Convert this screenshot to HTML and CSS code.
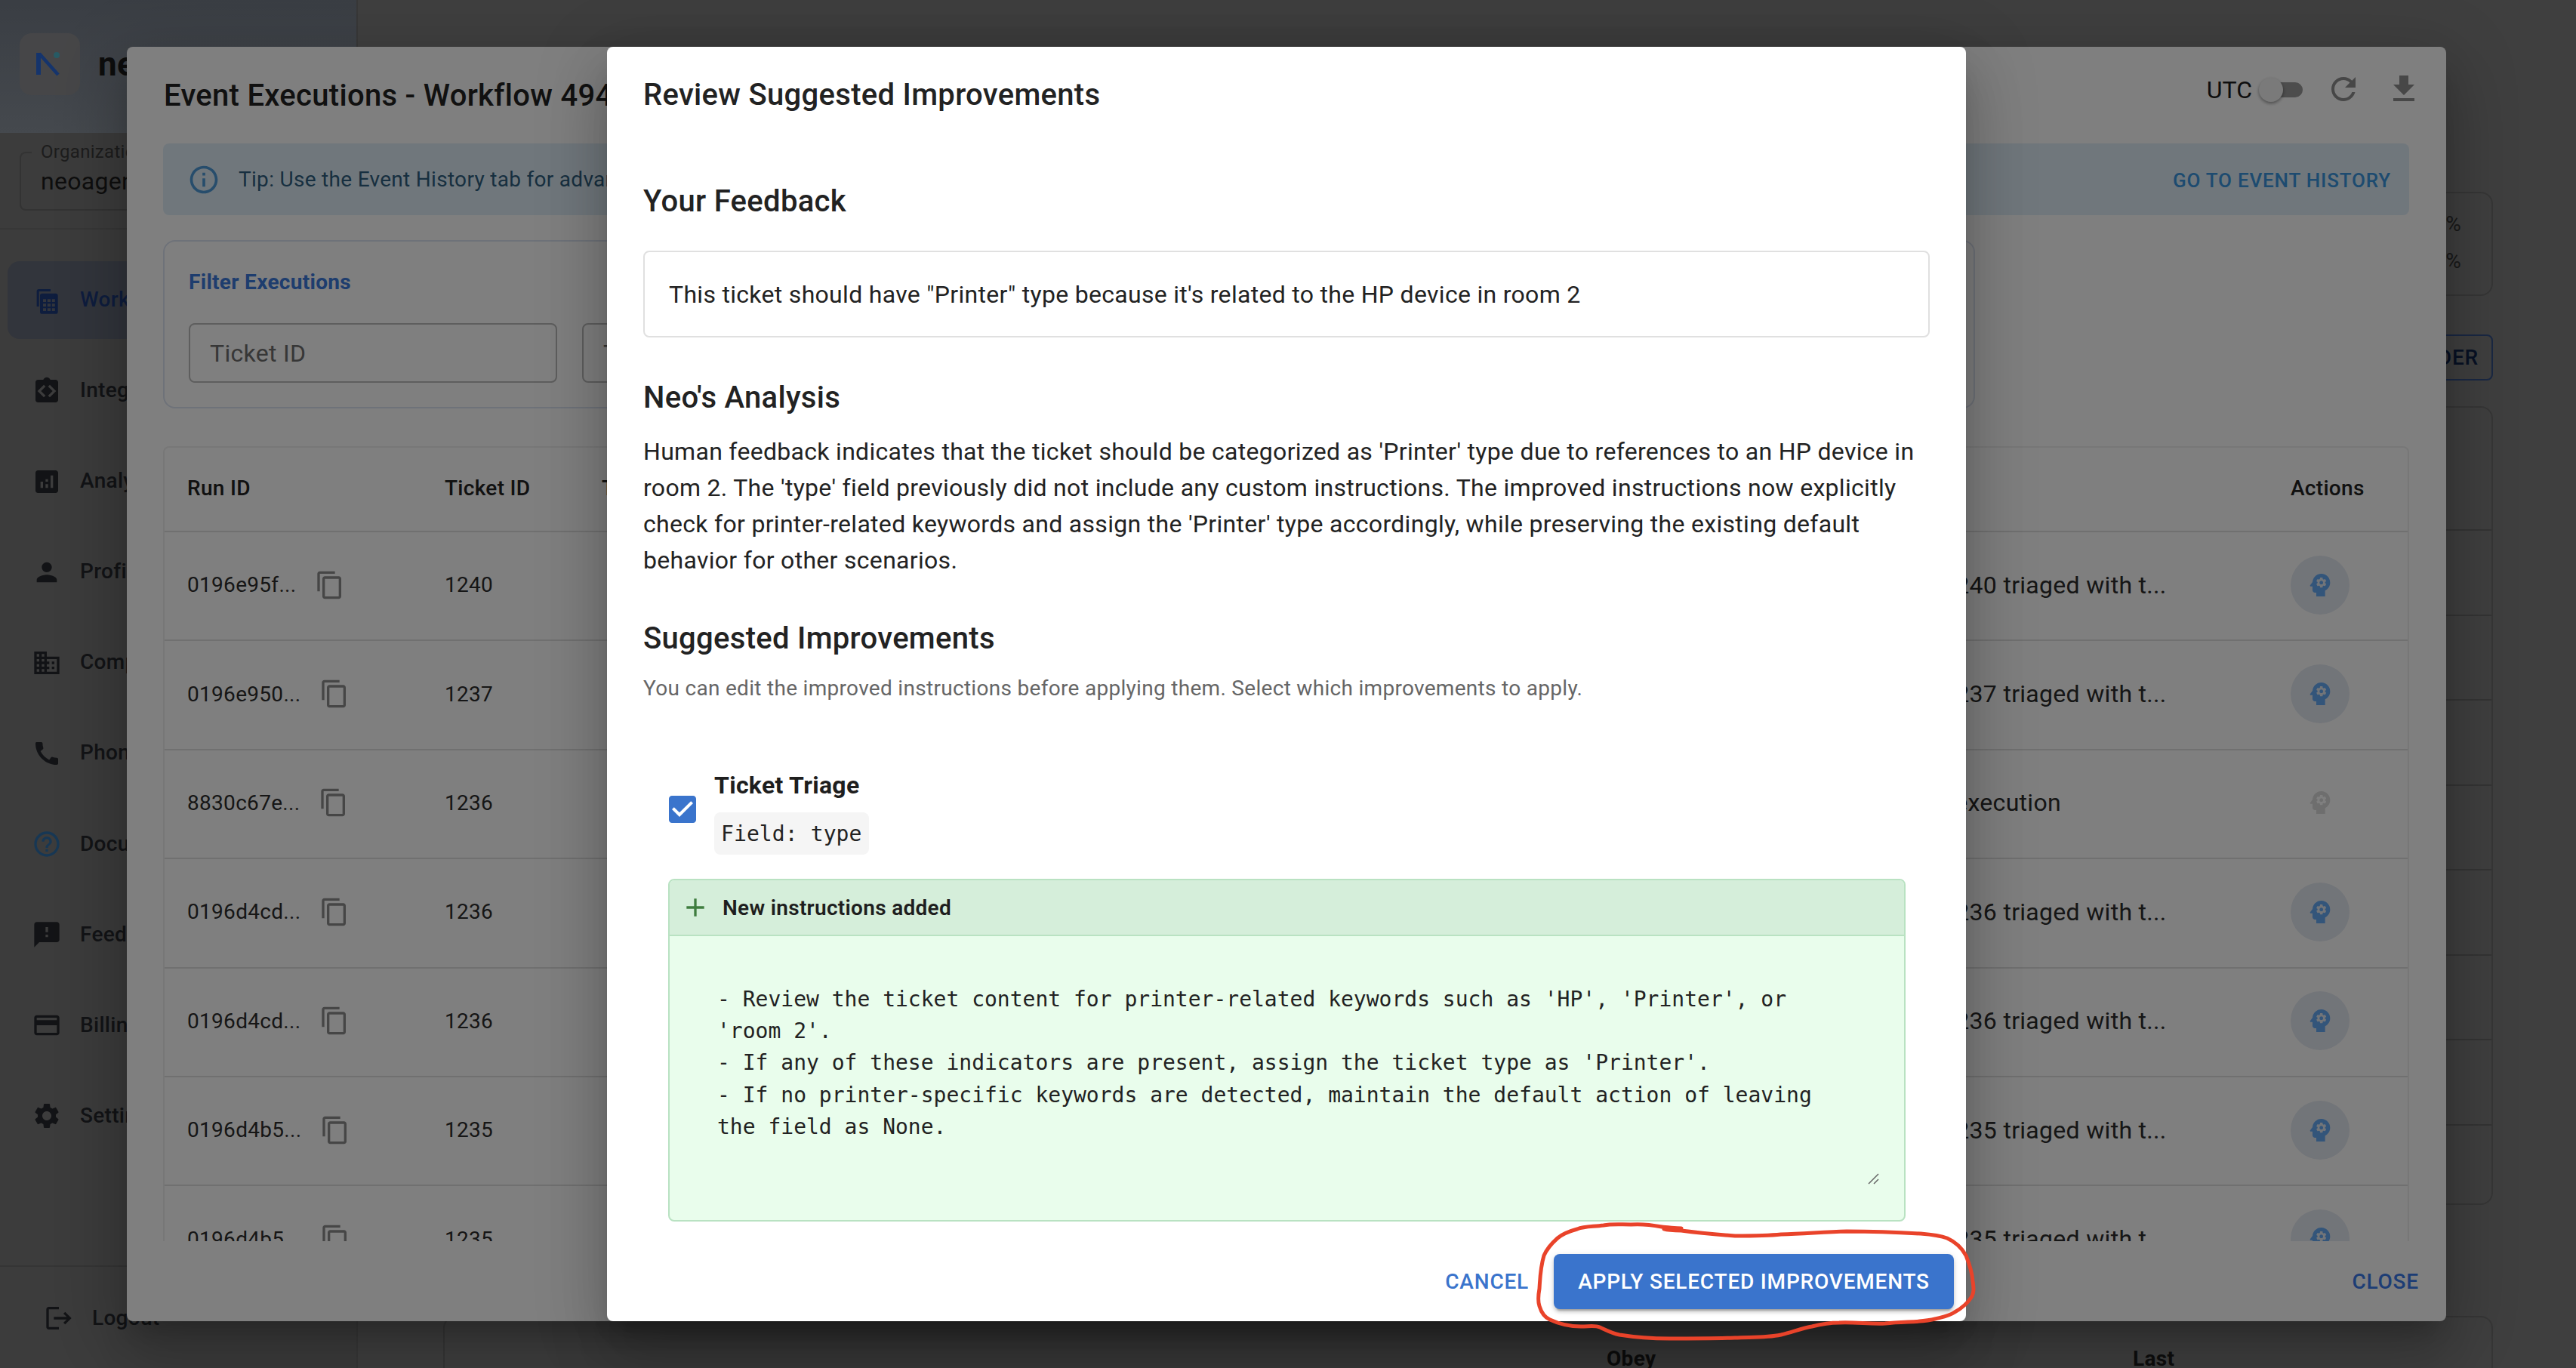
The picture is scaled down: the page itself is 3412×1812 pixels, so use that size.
FILE: index.html
```html
<!DOCTYPE html>
<html lang="en">
<head>
<meta charset="utf-8">
<title>Review Suggested Improvements</title>
<link rel="stylesheet" href="styles.css">
</head>
<body>
<svg class="defs" width="0" height="0" aria-hidden="true">
  <symbol id="i-copy" viewBox="0 0 24 24"><path d="M16 1H4c-1.1 0-2 .9-2 2v14h2V3h12V1zm3 4H8c-1.1 0-2 .9-2 2v14c0 1.1.9 2 2 2h11c1.1 0 2-.9 2-2V7c0-1.1-.9-2-2-2zm0 16H8V7h11v14z"/></symbol>
  <symbol id="i-head" viewBox="0 0 24 24"><path d="M13 8.57c-.79 0-1.43.64-1.43 1.43s.64 1.43 1.43 1.43 1.43-.64 1.43-1.43-.64-1.43-1.43-1.43z"/><path d="M13 3C9.25 3 6.2 5.94 6.02 9.64L4.1 12.2c-.25.33-.01.8.4.8H6v3c0 1.1.9 2 2 2h1v3h7v-4.68c2.36-1.12 4-3.53 4-6.32 0-3.87-3.13-7-7-7zm3 7c0 .13-.01.26-.02.39l.83.66c.08.06.1.16.05.25l-.8 1.39c-.05.09-.16.12-.24.09l-.99-.4c-.21.16-.43.29-.67.39L14 13.83c-.01.1-.1.17-.2.17h-1.6c-.1 0-.18-.07-.2-.17l-.15-1.06c-.25-.1-.47-.23-.68-.39l-.99.4c-.09.03-.2 0-.25-.09l-.8-1.39c-.05-.08-.03-.19.05-.25l.84-.66c-.01-.13-.02-.26-.02-.39s.02-.27.04-.39l-.85-.66c-.08-.06-.1-.16-.05-.26l.8-1.38c.05-.09.15-.12.24-.09l1 .4c.2-.15.43-.29.67-.39L12 6.17c.02-.1.1-.17.2-.17h1.6c.1 0 .18.07.2.17l.15 1.06c.24.1.46.23.67.39l1-.4c.09-.03.2 0 .24.09l.8 1.38c.05.09.03.2-.05.26l-.85.66c.03.12.04.25.04.39z"/></symbol>
</svg>

<div class="app">
  <aside class="sidebar">
    <div class="brand">
      <div class="logo">
        <svg viewBox="0 0 80 82" width="80" height="82"><path class="logo-n" d="M25 55V26"/><path class="logo-d" d="M26 27L51 55"/><circle class="logo-dot" cx="49" cy="29" r="4"/></svg>
      </div>
      <span class="brand-name">neoagent</span>
    </div>
    <div class="org">
      <div class="org-field">
        <span class="org-label">Organization</span>
        <span class="org-value">neoagent</span>
      </div>
    </div>
    <nav class="nav">
      <a class="nav-item active">
        <svg class="nav-icon" viewBox="0 0 24 24"><path d="M4 4.5C4 3.7 4.7 3 5.5 3H15v1.8H5.8v12H4z"/><path fill-rule="evenodd" d="M8.2 6.5h11c.9 0 1.6.7 1.6 1.6v13c0 .9-.7 1.6-1.6 1.6h-11c-.9 0-1.6-.7-1.6-1.6v-13c0-.9.7-1.6 1.6-1.6zM9 11v2.2h2.4V11zm3.5 0v2.2H15V11zm3.6 0v2.2h2.4V11zM9 14.6v2.2h2.4v-2.2zm3.5 0v2.2H15v-2.2zm3.6 0v2.2h2.4v-2.2zM9 18.2v2.2h2.4v-2.2zm3.5 0v2.2H15v-2.2zm3.6 0v2.2h2.4v-2.2z"/></svg>
        <span>Workflows</span>
      </a>
      <a class="nav-item">
        <svg class="nav-icon" viewBox="0 0 24 24"><path fill-rule="evenodd" d="M19 3h-4.2C14.4 1.8 13.3 1 12 1s-2.4.8-2.8 2H5c-1.1 0-2 .9-2 2v14c0 1.1.9 2 2 2h14c1.100 0 2-.9 2-2V5c0-1.100-.9-2-2-2zM11 15.600 9.600 17l-5-5 5-5L11 8.400 7.400 12zm3.400 1.400L13 15.600l3.600-3.600L13 8.400 14.400 7l5 5z"/></svg>
        <span>Integrations</span>
      </a>
      <a class="nav-item">
        <svg class="nav-icon" viewBox="0 0 24 24"><path d="M19 3H5c-1.100 0-2 .9-2 2v14c0 1.100.9 2 2 2h14c1.100 0 2-.9 2-2V5c0-1.100-.9-2-2-2zM9 17H7v-5h2v5zm4 0h-2v-3h2v3zm0-5h-2v-2h2v2zm4 5h-2V7h2v10z"/></svg>
        <span>Analytics</span>
      </a>
      <a class="nav-item">
        <svg class="nav-icon" viewBox="0 0 24 24"><path d="M12 12c2.210 0 4-1.790 4-4s-1.790-4-4-4-4 1.790-4 4 1.790 4 4 4zm0 2c-2.670 0-8 1.340-8 4v2h16v-2c0-2.660-5.330-4-8-4z"/></svg>
        <span>Profile</span>
      </a>
      <a class="nav-item">
        <svg class="nav-icon" viewBox="0 0 24 24"><path d="M12 7V3H2v18h20V7H12zM6 19H4v-2h2v2zm0-4H4v-2h2v2zm0-4H4V9h2v2zm0-4H4V5h2v2zm4 12H8v-2h2v2zm0-4H8v-2h2v2zm0-4H8V9h2v2zm0-4H8V5h2v2zm10 12h-8v-2h2v-2h-2v-2h2v-2h-2V9h8v10zm-2-8h-2v2h2v-2zm0 4h-2v2h2v-2z"/></svg>
        <span>Company</span>
      </a>
      <a class="nav-item">
        <svg class="nav-icon" viewBox="0 0 24 24"><path d="M20.010 15.380c-1.230 0-2.420-.2-3.530-.56-.35-.12-.74-.03-1.010.24l-1.570 1.970c-2.830-1.350-5.480-3.900-6.890-6.830l1.950-1.660c.27-.28.35-.67.24-1.020-.37-1.110-.56-2.300-.56-3.530 0-.54-.45-.99-.99-.99H4.190C3.650 3 3 3.240 3 3.990 3 13.280 10.730 21 20.010 21c.71 0 .99-.63.99-1.180v-3.450c0-.54-.45-.99-.99-.99z"/></svg>
        <span>Phone</span>
      </a>
      <a class="nav-item">
        <svg class="nav-icon help" viewBox="0 0 24 24"><path d="M11 18h2v-2h-2v2zm1-16C6.480 2 2 6.480 2 12s4.480 10 10 10 10-4.480 10-10S17.520 2 12 2zm0 18c-4.410 0-8-3.590-8-8s3.590-8 8-8 8 3.590 8 8-3.590 8-8 8zm0-14c-2.210 0-4 1.790-4 4h2c0-1.100.9-2 2-2s2 .9 2 2c0 2-3 1.750-3 5h2c0-2.250 3-2.500 3-5 0-2.210-1.790-4-4-4z"/></svg>
        <span>Documentation</span>
      </a>
      <a class="nav-item">
        <svg class="nav-icon" viewBox="0 0 24 24"><path d="M20 2H4c-1.100 0-1.990.9-1.990 2L2 22l4-4h14c1.100 0 2-.9 2-2V4c0-1.100-.9-2-2-2zm-7 12h-2v-2h2v2zm0-4h-2V6h2v4z"/></svg>
        <span>Feedback</span>
      </a>
      <a class="nav-item">
        <svg class="nav-icon" viewBox="0 0 24 24"><path d="M20 4H4c-1.110 0-1.990.89-1.990 2L2 18c0 1.110.89 2 2 2h16c1.110 0 2-.89 2-2V6c0-1.110-.89-2-2-2zm0 14H4v-6h16v6zm0-10H4V6h16v2z"/></svg>
        <span>Billing</span>
      </a>
      <a class="nav-item">
        <svg class="nav-icon" viewBox="0 0 24 24"><path d="M19.140 12.940c.04-.3.06-.61.06-.94 0-.32-.02-.64-.07-.94l2.030-1.580c.18-.14.23-.41.12-.61l-1.920-3.320c-.12-.22-.37-.29-.59-.22l-2.390.96c-.5-.38-1.030-.7-1.620-.94l-.36-2.540c-.04-.24-.24-.41-.48-.41h-3.840c-.24 0-.43.17-.47.41l-.36 2.540c-.59.24-1.130.57-1.620.94l-2.390-.96c-.22-.08-.47 0-.59.22L2.740 8.870c-.12.21-.08.47.12.61l2.030 1.580c-.05.3-.09.63-.09.94s.02.64.07.94l-2.030 1.580c-.18.14-.23.41-.12.61l1.920 3.320c.12.22.37.29.59.22l2.390-.96c.5.38 1.030.7 1.620.94l.36 2.540c.05.24.24.41.48.41h3.840c.24 0 .44-.17.47-.41l.36-2.540c.59-.24 1.130-.56 1.620-.94l2.390.96c.22.08.47 0 .59-.22l1.920-3.320c.12-.22.07-.47-.12-.61l-2.010-1.580zM12 15.600c-1.980 0-3.600-1.620-3.600-3.600s1.620-3.600 3.600-3.600 3.600 1.620 3.600 3.600-1.620 3.600-3.600 3.600z"/></svg>
        <span>Settings</span>
      </a>
    </nav>
    <div class="side-foot">
      <svg class="nav-icon" viewBox="0 0 24 24"><path d="M17 7l-1.410 1.410L18.170 11H8v2h10.170l-2.580 2.580L17 17l5-5zM4 5h8V3H4c-1.100 0-2 .9-2 2v14c0 1.100.9 2 2 2h8v-2H4V5z"/></svg>
      <span>Logout</span>
    </div>
  </aside>

  <main class="main">
    <section class="stat-card"><span>%</span><span>%</span></section>
    <div class="toolbar"><button class="outline-btn">NEW FOLDER</button></div>
    <section class="bg-table">
      <div class="bg-head"></div>
      <div class="bg-row"></div><div class="bg-row"></div><div class="bg-row"></div><div class="bg-row"></div>
      <div class="bg-row"></div><div class="bg-row"></div><div class="bg-row"></div><div class="bg-row"></div>
    </section>
    <section class="bg-card"><span>Obey</span><span>Last</span></section>
  </main>
</div>

<div class="dialog executions">
  <header class="ex-head">
    <h2 class="ex-title">Event Executions - Workflow 4940</h2>
    <div class="ex-tools">
      <span class="utc">UTC</span>
      <span class="switch"><span class="track"></span><span class="thumb"></span></span>
      <svg class="tool" viewBox="0 0 24 24"><path d="M17.650 6.350C16.200 4.900 14.210 4 12 4c-4.420 0-7.990 3.580-7.990 8s3.570 8 7.990 8c3.730 0 6.840-2.550 7.730-6h-2.080c-.82 2.330-3.040 4-5.650 4-3.310 0-6-2.690-6-6s2.690-6 6-6c1.660 0 3.140.69 4.220 1.780L13 11h7V4l-2.350 2.350z"/></svg>
      <svg class="tool dl" viewBox="0 0 24 24"><path d="M19 9h-4V3H9v6H5l7 7 7-7zM5 18v2h14v-2H5z"/></svg>
    </div>
  </header>
  <div class="alert">
    <svg class="alert-icon" viewBox="0 0 24 24"><path d="M11 7h2v2h-2zm0 4h2v6h-2zm1-9C6.480 2 2 6.480 2 12s4.480 10 10 10 10-4.480 10-10S17.520 2 12 2zm0 18c-4.410 0-8-3.590-8-8s3.590-8 8-8 8 3.590 8 8-3.590 8-8 8z"/></svg>
    <span class="alert-text">Tip: Use the Event History tab for advanced filtering and search</span>
    <span class="alert-action">GO TO EVENT HISTORY</span>
  </div>
  <section class="filter">
    <h3 class="filter-title">Filter Executions</h3>
    <div class="filter-row">
      <div class="input">Ticket ID</div>
      <div class="input">Type</div>
      <div class="input">Status</div>
      <div class="input">Date</div>
    </div>
  </section>
  <section class="table">
    <div class="row head">
      <span>Run ID</span><span>Ticket ID</span><span>Type</span><span></span><span>Actions</span>
    </div>
    <div class="row">
      <span class="run">0196e95f...<svg class="copy"><use href="#i-copy"/></svg></span><span>1240</span><span></span>
      <span class="summary">Ticket 1240 triaged with t...</span><span class="act"><svg><use href="#i-head"/></svg></span>
    </div>
    <div class="row">
      <span class="run">0196e950...<svg class="copy"><use href="#i-copy"/></svg></span><span>1237</span><span></span>
      <span class="summary">Ticket 1237 triaged with t...</span><span class="act"><svg><use href="#i-head"/></svg></span>
    </div>
    <div class="row">
      <span class="run">8830c67e...<svg class="copy"><use href="#i-copy"/></svg></span><span>1236</span><span></span>
      <span class="summary failed">Failed execution</span><span class="act off"><svg><use href="#i-head"/></svg></span>
    </div>
    <div class="row">
      <span class="run">0196d4cd...<svg class="copy"><use href="#i-copy"/></svg></span><span>1236</span><span></span>
      <span class="summary">Ticket 1236 triaged with t...</span><span class="act"><svg><use href="#i-head"/></svg></span>
    </div>
    <div class="row">
      <span class="run">0196d4cd...<svg class="copy"><use href="#i-copy"/></svg></span><span>1236</span><span></span>
      <span class="summary">Ticket 1236 triaged with t...</span><span class="act"><svg><use href="#i-head"/></svg></span>
    </div>
    <div class="row">
      <span class="run">0196d4b5...<svg class="copy"><use href="#i-copy"/></svg></span><span>1235</span><span></span>
      <span class="summary">Ticket 1235 triaged with t...</span><span class="act"><svg><use href="#i-head"/></svg></span>
    </div>
    <div class="row">
      <span class="run">0196d4b5...<svg class="copy"><use href="#i-copy"/></svg></span><span>1235</span><span></span>
      <span class="summary">Ticket 1235 triaged with t...</span><span class="act"><svg><use href="#i-head"/></svg></span>
    </div>
  </section>
  <footer class="ex-foot"><span class="close">CLOSE</span></footer>
</div>

<div class="backdrop"></div>

<div class="dialog review">
  <h2 class="rv-title">Review Suggested Improvements</h2>
  <div class="rv-body">
    <h3 class="rv-h first">Your Feedback</h3>
    <div class="feedback">This ticket should have "Printer" type because it's related to the HP device in room 2</div>
    <h3 class="rv-h">Neo's Analysis</h3>
    <p class="analysis">Human feedback indicates that the ticket should be categorized as 'Printer' type due to references to an HP device in room 2. The 'type' field previously did not include any custom instructions. The improved instructions now explicitly check for printer-related keywords and assign the 'Printer' type accordingly, while preserving the existing default behavior for other scenarios.</p>
    <h3 class="rv-h">Suggested Improvements</h3>
    <p class="hint">You can edit the improved instructions before applying them. Select which improvements to apply.</p>
    <div class="item">
      <svg class="check" viewBox="0 0 24 24"><path d="M19 3H5c-1.110 0-2 .9-2 2v14c0 1.100.89 2 2 2h14c1.110 0 2-.9 2-2V5c0-1.100-.89-2-2-2zm-9 14l-5-5 1.410-1.410L10 14.170l7.590-7.590L19 8l-9 9z"/></svg>
      <div class="item-text">
        <div class="item-name">Ticket Triage</div>
        <code class="chip">Field: type</code>
      </div>
    </div>
    <div class="diff">
      <div class="diff-head">
        <svg class="plus" viewBox="0 0 24 24"><path d="M19 13h-6v6h-2v-6H5v-2h6V5h2v6h6v2z"/></svg>
        <span>New instructions added</span>
      </div>
      <div class="diff-body">
<pre class="diff-text">- Review the ticket content for printer-related keywords such as 'HP', 'Printer', or
'room 2'.
- If any of these indicators are present, assign the ticket type as 'Printer'.
- If no printer-specific keywords are detected, maintain the default action of leaving
the field as None.</pre>
        <svg class="grip" viewBox="0 0 16 16"><path d="M1 14 14 1M8 14l6-6"/></svg>
      </div>
    </div>
  </div>
  <footer class="rv-foot">
    <button class="text-btn">CANCEL</button>
    <button class="primary-btn">APPLY SELECTED IMPROVEMENTS</button>
  </footer>
</div>

<svg class="scribble" viewBox="0 0 3412 1812" width="3412" height="1812" aria-hidden="true">
  <path d="M2227 1627C2215 1626 2206 1626 2201 1625C2185 1622 2172 1621 2160 1622C2146 1622 2135 1621 2124 1623C2110 1625 2099 1624 2089 1628C2078 1631 2070 1634 2063 1640C2054 1648 2049 1654 2045 1663C2040 1680 2040 1692 2039 1707C2037 1718 2037 1724 2039 1730C2042 1740 2046 1745 2053 1748C2068 1755 2080 1757 2094 1757C2105 1757 2112 1755 2119 1758C2130 1763 2135 1766 2145 1768C2170 1772 2190 1773 2211 1773C2245 1773 2270 1773 2298 1772C2322 1771 2340 1772 2359 1768C2375 1764 2388 1759 2400 1757C2412 1754 2424 1752 2436 1752C2456 1751 2478 1754 2497 1753C2525 1750 2545 1752 2563 1747C2575 1744 2582 1743 2589 1738C2600 1732 2607 1725 2612 1717C2615 1710 2614 1705 2613 1697C2612 1685 2608 1673 2604 1663C2598 1652 2590 1645 2579 1640C2568 1636 2555 1635 2543 1634C2510 1632 2478 1631 2446 1631C2415 1632 2390 1634 2359 1635C2340 1637 2320 1637 2298 1637C2272 1635 2250 1633 2227 1630C2217 1630 2210 1630 2204 1628"/>
</svg>
</body>
</html>
```
FILE: styles.css
```css
* { box-sizing: border-box; }
html, body { margin: 0; padding: 0; }
body {
  width: 3412px;
  height: 1812px;
  overflow: hidden;
  position: relative;
  font-family: Roboto, "Liberation Sans", sans-serif;
  letter-spacing: .3px;
  color: #222;
}
.defs { position: absolute; }
h2, h3, p, pre { margin: 0; }
button { font-family: inherit; border: 0; background: none; padding: 0; }

/* ---------- app underneath ---------- */
.app { display: flex; height: 1812px; overflow: hidden; background: #7e7e7e; }
.sidebar {
  width: 474px;
  flex: none;
  display: flex;
  flex-direction: column;
  background: #787878;
  border-right: 2px solid #707070;
  color: #25272c;
}
.brand {
  height: 176px;
  display: flex;
  align-items: center;
  gap: 24px;
  padding: 0 26px 6px;
  background: linear-gradient(180deg, #747c88, #8a929c);
}
.logo { width: 80px; height: 82px; border-radius: 16px; background: #8d8d90; }
.logo svg { display: block; }
.logo-n { fill: none; stroke: #2a68d8; stroke-width: 6; }
.logo-d { fill: none; stroke: #2a68d8; stroke-width: 4.5; }
.logo-dot { fill: #4fb4c8; }
.brand-name { font-size: 44px; font-weight: 700; color: #1a1a1a; }
.org { padding: 25px 26px; border-bottom: 2px solid #6e6e6e; height: 128px; }
.org-field {
  height: 78px;
  border: 2px solid #666;
  border-radius: 8px;
  padding: 0 0 0 26px;
  display: flex;
  align-items: center;
  position: relative;
}
.org-label {
  position: absolute;
  top: -16px;
  left: 14px;
  padding: 0 12px;
  background: #787878;
  font-size: 24px;
  line-height: 28px;
  color: #3a3a3a;
}
.org-value { font-size: 32px; color: #1c1c1c; }
.nav { flex: 1; min-height: 0; padding: 42px 0 0 10px; }
.nav-item {
  height: 103px;
  margin-bottom: 17.1px;
  display: flex;
  align-items: center;
  gap: 24px;
  padding-left: 32px;
  border-radius: 16px;
  font-size: 28px;
  font-weight: 500;
}
.nav-item span { position: relative; top: -1px; }
.nav-item.active { background: #646a78; color: #1c3a7c; }
.nav-icon { width: 40px; height: 40px; flex: none; fill: currentColor; }
.nav-item.active .nav-icon { fill: #1c3a7c; }
.nav-icon.help { fill: #2f6fa8; }
.side-foot {
  height: 136px;
  flex: none;
  border-top: 2px solid #6a6a6a;
  display: flex;
  align-items: center;
  gap: 24px;
  padding: 0 0 0 58px;
  font-size: 28px;
  font-weight: 500;
}
.side-foot .nav-icon { position: relative; top: 1px; }
.main {
  flex: 1;
  min-width: 0;
  padding: 254px 110px 0 113px;
  display: flex;
  flex-direction: column;
}
.stat-card {
  height: 138px;
  flex: none;
  border: 2px solid #6c6c6c;
  border-radius: 16px;
  padding: 24px 40px 0;
  display: flex;
  flex-direction: column;
  align-items: flex-end;
  gap: 16px;
  font-size: 28px;
  color: #333;
}
.toolbar { margin-top: 51px; display: flex; justify-content: flex-end; flex: none; }
.outline-btn {
  height: 61px;
  padding: 0 17px;
  border: 2px solid #334f86;
  border-radius: 8px;
  font-size: 28px;
  font-weight: 500;
  letter-spacing: .8px;
  color: #0e2248;
}
.bg-table {
  margin-top: 34px;
  height: 1058px;
  flex: none;
  border: 2px solid #6c6c6c;
  border-radius: 16px;
}
.bg-head { height: 163px; border-bottom: 2px solid #686868; }
.bg-row { height: 112.5px; border-bottom: 2px solid #686868; }
.bg-row:last-child { border-bottom: 0; }
.bg-card {
  margin-top: 147px;
  height: 69px;
  flex: none;
  border: 2px solid #6c6c6c;
  border-bottom: 0;
  border-radius: 16px 16px 0 0;
  display: grid;
  grid-template-columns: 697px auto;
  padding: 38px 0 0 1539px;
  font-size: 28px;
  font-weight: 700;
  color: #1c1c1c;
}
.bg-card span { display: block; line-height: 34px; }

/* ---------- dialogs ---------- */
.dialog {
  position: absolute;
  top: 62px;
  height: 1688px;
  background: #fff;
  border-radius: 8px;
  display: flex;
  flex-direction: column;
  box-shadow: 0 22px 30px -14px rgba(0,0,0,.2), 0 48px 76px 6px rgba(0,0,0,.14), 0 18px 92px 16px rgba(0,0,0,.12);
}
.executions { left: 168px; width: 3072px; }
.review { left: 804px; width: 1800px; }
.backdrop { position: absolute; inset: 0; background: rgba(0,0,0,.5); }

.ex-head {
  height: 128px;
  flex: none;
  display: flex;
  align-items: center;
  justify-content: space-between;
  padding: 0 32px 0 49px;
}
.ex-title { font-size: 40px; font-weight: 500; color: #232323; }
.ex-tools { display: flex; align-items: center; padding-bottom: 14px; }
.utc { font-size: 32px; color: #1c1c1c; letter-spacing: 0; }
.switch { width: 58px; height: 34px; margin-left: 9px; position: relative; }
.track {
  position: absolute;
  left: 8px; right: 0; top: 7px;
  height: 20px;
  border-radius: 10px;
  background: #9a9a9a;
}
.thumb {
  position: absolute;
  left: 0; top: 1px;
  width: 32px; height: 32px;
  border-radius: 50%;
  background: #f4f4f4;
  box-shadow: 0 2px 4px rgba(0,0,0,.4);
}
.tool { width: 48px; height: 48px; fill: #8e8e8e; margin-left: 30px; position: relative; top: -1px; }
.tool.dl { margin-left: 32px; }

.alert {
  height: 95px;
  flex: none;
  margin: 0 49px 0 48px;
  padding: 0 24px 0 32px;
  border-radius: 8px;
  background: #e1eff9;
  display: flex;
  align-items: center;
}
.alert-icon { width: 44px; height: 44px; fill: #4f9bd8; flex: none; }
.alert-text { font-size: 28px; margin-left: 24px; color: #2f5f80; flex: 1; }
.alert-action { font-size: 26px; font-weight: 500; letter-spacing: .8px; color: #3b97e0; padding-top: 3px; }

.filter {
  margin: 33px 0 0 48px;
  width: 2400px;
  height: 223px;
  flex: none;
  border: 2px solid #dde4f2;
  border-radius: 16px;
  padding: 38px 32px 0;
}
.filter-title { font-size: 28px; line-height: 32px; font-weight: 700; color: #3d7adc; }
.filter-row { display: flex; gap: 33px; margin-top: 38px; }
.input {
  width: 488px;
  height: 79px;
  border: 2px solid #bdbdbd;
  border-radius: 8px;
  padding-left: 26px;
  display: flex;
  align-items: center;
  font-size: 32px;
  color: #6e6e6e;
}
.table {
  margin: 50px 49px 0 48px;
  height: 1053px;
  flex: none;
  overflow: hidden;
  border: 2px solid #efefef;
  border-bottom: 0;
  border-radius: 8px 8px 0 0;
}
.row {
  display: grid;
  grid-template-columns: 341px 208px 1678px 559px 1fr;
  align-items: center;
  height: 144.4px;
  padding: 0 0 3px 30px;
  border-bottom: 2px solid #e0e0e0;
  font-size: 28px;
  color: #2c2c2c;
}
.row.head { height: 112px; font-weight: 500; color: #222; }
.run { display: flex; align-items: center; gap: 25px; }
.copy { width: 40px; height: 40px; fill: #8c8c8c; flex: none; }
.summary { font-size: 32px; white-space: nowrap; }
.summary.failed { padding-left: 19px; }
.act {
  width: 78px;
  height: 78px;
  border-radius: 50%;
  background: #e5eaf2;
  display: flex;
  align-items: center;
  justify-content: center;
  fill: #66aaf5;
}
.act svg { width: 40px; height: 40px; }
.act.off { background: none; fill: #dcdcdc; }
.ex-foot {
  flex: 1;
  display: flex;
  align-items: center;
  justify-content: flex-end;
  padding-right: 36px;
}
.close { font-size: 28px; font-weight: 500; letter-spacing: .8px; color: #3a7aea; }

/* ---------- review dialog ---------- */
.rv-title {
  height: 128px;
  flex: none;
  display: flex;
  align-items: center;
  padding: 0 0 2px 48px;
  font-size: 40px;
  font-weight: 500;
  color: #222;
}
.rv-body { flex: 1; padding: 0 48px; min-height: 0; }
.rv-h { font-size: 40px; line-height: 60px; font-weight: 500; margin-top: 50px; color: #222; }
.rv-h.first { margin-top: 47px; }
.feedback {
  margin-top: 35px;
  border: 2px solid #e0e0e0;
  border-radius: 8px;
  height: 115px;
  padding: 0 32px;
  display: flex;
  align-items: center;
  font-size: 32px;
  color: #222;
}
.analysis { margin-top: 17px; font-size: 32px; line-height: 48px; color: #222; }
.hint { margin-top: 15px; font-size: 28px; line-height: 42px; color: #666; }
.item { display: flex; align-items: center; gap: 18px; margin-top: 83px; padding-left: 28px; }
.check { width: 48px; height: 48px; fill: #3a74cc; flex: none; position: relative; top: -2px; }
.item-name { font-size: 32px; line-height: 48px; font-weight: 700; color: #1e1e1e; }
.chip {
  display: inline-flex;
  align-items: center;
  height: 56px;
  margin-top: 12px;
  padding: 0 9px;
  background: #f5f5f5;
  border-radius: 8px;
  font-family: "DejaVu Sans Mono", "Liberation Mono", monospace;
  font-size: 28px;
  letter-spacing: .1px;
  color: #222;
}
.diff {
  margin: 32px 32px 0 33px;
  height: 454px;
  border: 2px solid #b9e2c2;
  border-radius: 8px;
  background: #e9fdec;
  overflow: hidden;
}
.diff-head {
  height: 74px;
  background: #d5eeda;
  border-bottom: 2px solid #b9e2c2;
  display: flex;
  align-items: center;
  padding-left: 14px;
  gap: 16px;
  font-size: 28px;
  font-weight: 600;
  color: #1e1e1e;
}
.plus { width: 40px; height: 40px; fill: #3f7d3f; flex: none; }
.diff-body { position: relative; padding: 63px 0 0 63px; height: 376px; }
.diff-text {
  font-family: "DejaVu Sans Mono", "Liberation Mono", monospace;
  font-size: 28px;
  line-height: 42.2px;
  letter-spacing: 0;
  color: #222;
}
.grip {
  position: absolute;
  right: 32px;
  bottom: 46px;
  width: 16px;
  height: 16px;
  fill: none;
  stroke: #666;
  stroke-width: 1.5;
}
.rv-foot {
  height: 132px;
  flex: none;
  display: flex;
  align-items: center;
  justify-content: flex-end;
  gap: 33px;
  padding: 26px 16px 0 0;
}
.text-btn { font-size: 28px; font-weight: 500; letter-spacing: .8px; color: #3a74cc; }
.primary-btn {
  width: 530px;
  height: 73px;
  border-radius: 8px;
  background: #3a74cc;
  color: #fff;
  font-size: 28px;
  font-weight: 500;
  letter-spacing: .8px;
  box-shadow: 0 6px 2px -4px rgba(0,0,0,.2), 0 4px 4px rgba(0,0,0,.14), 0 2px 10px rgba(0,0,0,.12);
}
.scribble {
  position: absolute;
  left: 0;
  top: 0;
  pointer-events: none;
  fill: none;
  stroke: #e9432a;
  stroke-width: 5;
  stroke-linecap: round;
  stroke-linejoin: round;
}
```
